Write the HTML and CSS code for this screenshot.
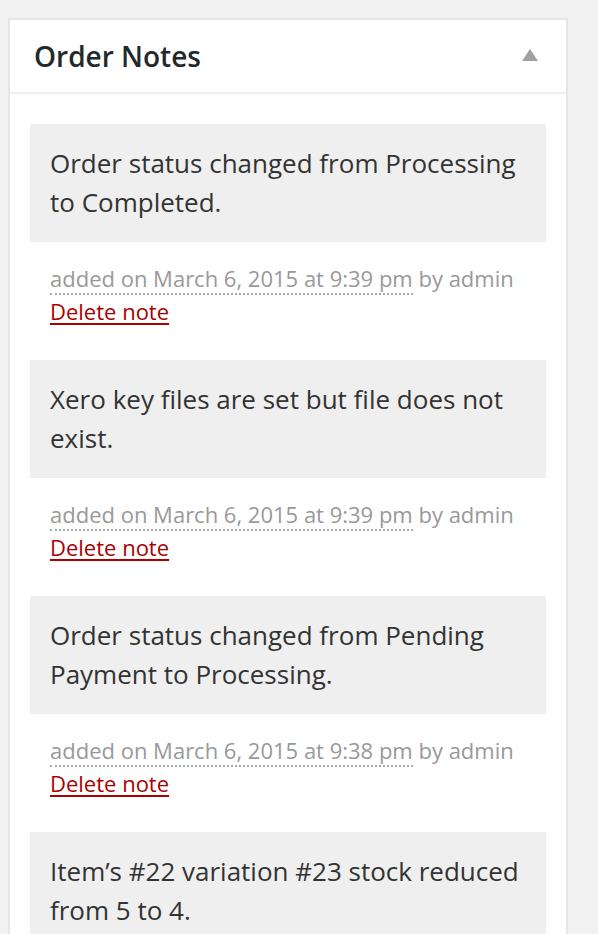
FILE: index.html
```html
<!DOCTYPE html>
<html>
<head>
<meta charset="utf-8">
<link rel="stylesheet" href="styles.css">
</head>
<body>
<div class="postbox">
  <div class="hndle">
    <h2 class="title">Order Notes</h2>
    <span class="toggle"></span>
  </div>
  <ul class="notes">
    <li class="note">
      <div class="note-content"><p>Order status changed from Processing to Completed.</p></div>
      <p class="meta"><abbr class="exact-date">added on March 6, 2015 at 9:39 pm</abbr> by admin<br><a class="delete" href="#">Delete note</a></p>
    </li>
    <li class="note">
      <div class="note-content"><p>Xero key files are set but file does not exist.</p></div>
      <p class="meta"><abbr class="exact-date">added on March 6, 2015 at 9:39 pm</abbr> by admin<br><a class="delete" href="#">Delete note</a></p>
    </li>
    <li class="note">
      <div class="note-content"><p>Order status changed from Pending Payment to Processing.</p></div>
      <p class="meta"><abbr class="exact-date">added on March 6, 2015 at 9:38 pm</abbr> by admin<br><a class="delete" href="#">Delete note</a></p>
    </li>
    <li class="note">
      <div class="note-content"><p>Item’s #22 variation #23 stock reduced from 5 to 4.</p></div>
    </li>
  </ul>
</div>
</body>
</html>
```

FILE: styles.css
```css
html, body {
  margin: 0;
  padding: 0;
  background: #f1f1f1;
  height: 934px;
  overflow: hidden;
}
body {
  font-family: "Open Sans", "Liberation Sans", sans-serif;
  padding: 18px 0 0 8px;
}
.postbox {
  width: 556px;
  background: #fff;
  border: 2px solid #e5e5e5;
}
.hndle {
  display: flex;
  align-items: center;
  justify-content: space-between;
  padding: 16px 28px 16px 24px;
  border-bottom: 2px solid #eeeeee;
}
.title {
  margin: 0;
  font-size: 28px;
  line-height: 40px;
  font-weight: 600;
  color: #23282d;
}
.toggle {
  width: 0;
  height: 0;
  border-left: 8px solid transparent;
  border-right: 8px solid transparent;
  border-bottom: 12px solid #a0a0a0;
  margin-top: -2px;
}
.notes {
  list-style: none;
  margin: 0;
  padding: 30px 20px 0;
}
.note {
  margin: 0 0 12px;
}
.note-content {
  background: #efefef;
  padding: 20px;
}
.note-content p {
  margin: 0;
  font-size: 26px;
  line-height: 39px;
  color: #333;
}
.meta {
  margin: 0;
  padding: 20px;
  font-size: 22px;
  line-height: 33px;
  color: #999;
}
.exact-date {
  text-decoration: none;
  border-bottom: 2px dotted #aaa;
}
.delete {
  color: #a00;
  text-decoration: underline;
  text-decoration-thickness: 2px;
  text-underline-offset: 3px;
}
```
